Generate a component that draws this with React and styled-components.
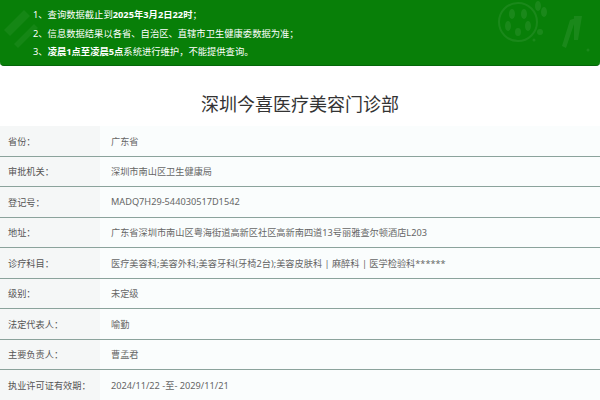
import React from 'react'
import styled, { createGlobalStyle } from 'styled-components'

const GlobalStyle = createGlobalStyle`
    body {
        margin: 0;
        background: #ffffff;
        font-family: "Noto Sans", "Noto Sans CJK SC", sans-serif;
    }
`

const Page = styled.div`
    width: 600px;
    height: 400px;
    overflow: hidden;
    background: #ffffff;
`

const Notice = styled.div`
    position: relative;
    height: 66px;
    box-sizing: border-box;
    padding: 6px 0 0 33px;
    background: #087f08;
    border-bottom: 1px solid #05660a;
    border-radius: 0 0 4px 4px;
    overflow: hidden;
`

const NoticeLine = styled.div`
    position: relative;
    z-index: 1;
    color: #ffffff;
    font-size: 9.3px;
    line-height: 18.5px;
    white-space: nowrap;
    b {
        font-weight: 700;
    }
`

const Decor = styled.svg`
    position: absolute;
    top: 0;
    right: 0;
    opacity: 0.07;
`

const DecorLeft = styled.svg`
    position: absolute;
    top: 0;
    left: 0;
    opacity: 0.05;
`

const Title = styled.h1`
    margin: 0;
    padding: 26px 0 0;
    height: 60px;
    box-sizing: border-box;
    text-align: center;
    font-size: 18px;
    line-height: 24px;
    font-weight: 400;
    color: #333333;
`

const Table = styled.div`
    display: flex;
    flex-direction: column;
`

const Row = styled.div`
    display: grid;
    grid-template-columns: 100px 1fr;
    height: 30.5px;
    box-sizing: border-box;
    border-bottom: ${p => (p.last ? 'none' : '1px solid #8ba39c')};
    font-size: 9.2px;
`

const Label = styled.div`
    display: flex;
    align-items: center;
    padding-left: 8px;
    background: #f5f7f7;
    color: #555555;
`

const Value = styled.div`
    display: flex;
    align-items: center;
    padding-left: 11px;
    background: #fafdfd;
    color: #666666;
    white-space: nowrap;
`

const rows = [
    ['省份：', '广东省'],
    ['审批机关：', '深圳市南山区卫生健康局'],
    ['登记号：', 'MADQ7H29-544030517D1542'],
    ['地址：', '广东省深圳市南山区粤海街道高新区社区高新南四道13号丽雅查尔顿酒店L203'],
    ['诊疗科目：', '医疗美容科;美容外科;美容牙科(牙椅2台);美容皮肤科 | 麻醉科 | 医学检验科******'],
    ['级别：', '未定级'],
    ['法定代表人：', '喻勤'],
    ['主要负责人：', '曹孟君'],
    ['执业许可证有效期：', '2024/11/22 -至- 2029/11/21'],
]

export default function App() {
    return (
        <Page>
            <GlobalStyle />
            <Notice>
                <DecorLeft width="60" height="66" viewBox="0 0 60 66">
                    <path d="M4 30 L24 10 L30 16 L10 36 Z" fill="#fff" />
                    <path d="M14 44 L34 24 L38 28 L18 48 Z" fill="#fff" />
                </DecorLeft>
                <Decor width="110" height="66" viewBox="0 0 110 66">
                    <circle cx="28" cy="22" r="19" fill="none" stroke="#fff" strokeWidth="2" />
                    <ellipse cx="22" cy="14" rx="3" ry="5" fill="#fff" />
                    <ellipse cx="34" cy="14" rx="3" ry="5" fill="#fff" />
                    <ellipse cx="18" cy="26" rx="3" ry="5" fill="#fff" />
                    <ellipse cx="38" cy="26" rx="3" ry="5" fill="#fff" />
                    <ellipse cx="28" cy="32" rx="3" ry="4" fill="#fff" />
                    <ellipse cx="48" cy="6" rx="3" ry="5" fill="#fff" />
                    <ellipse cx="54" cy="12" rx="3" ry="5" fill="#fff" />
                    <circle cx="50" cy="32" r="3" fill="#fff" />
                    <circle cx="44" cy="40" r="1.5" fill="#fff" />
                    <path d="M80 20 L86 18 L76 48 L72 46 Z" fill="#fff" />
                    <path d="M84 16 L92 16 L88 40 L84 40 Z" fill="#fff" />
                    <circle cx="98" cy="50" r="1.5" fill="#fff" />
                </Decor>
                <NoticeLine>1、查询数据截止到<b>2025年3月2日22时</b>；</NoticeLine>
                <NoticeLine>2、信息数据结果以各省、自治区、直辖市卫生健康委数据为准；</NoticeLine>
                <NoticeLine>3、<b>凌晨1点至凌晨5点</b>系统进行维护，不能提供查询。</NoticeLine>
            </Notice>
            <Title>深圳今喜医疗美容门诊部</Title>
            <Table>
                {rows.map(([label, value], i) => (
                    <Row key={label} last={i === rows.length - 1}>
                        <Label>{label}</Label>
                        <Value>{value}</Value>
                    </Row>
                ))}
            </Table>
        </Page>
    )
}
